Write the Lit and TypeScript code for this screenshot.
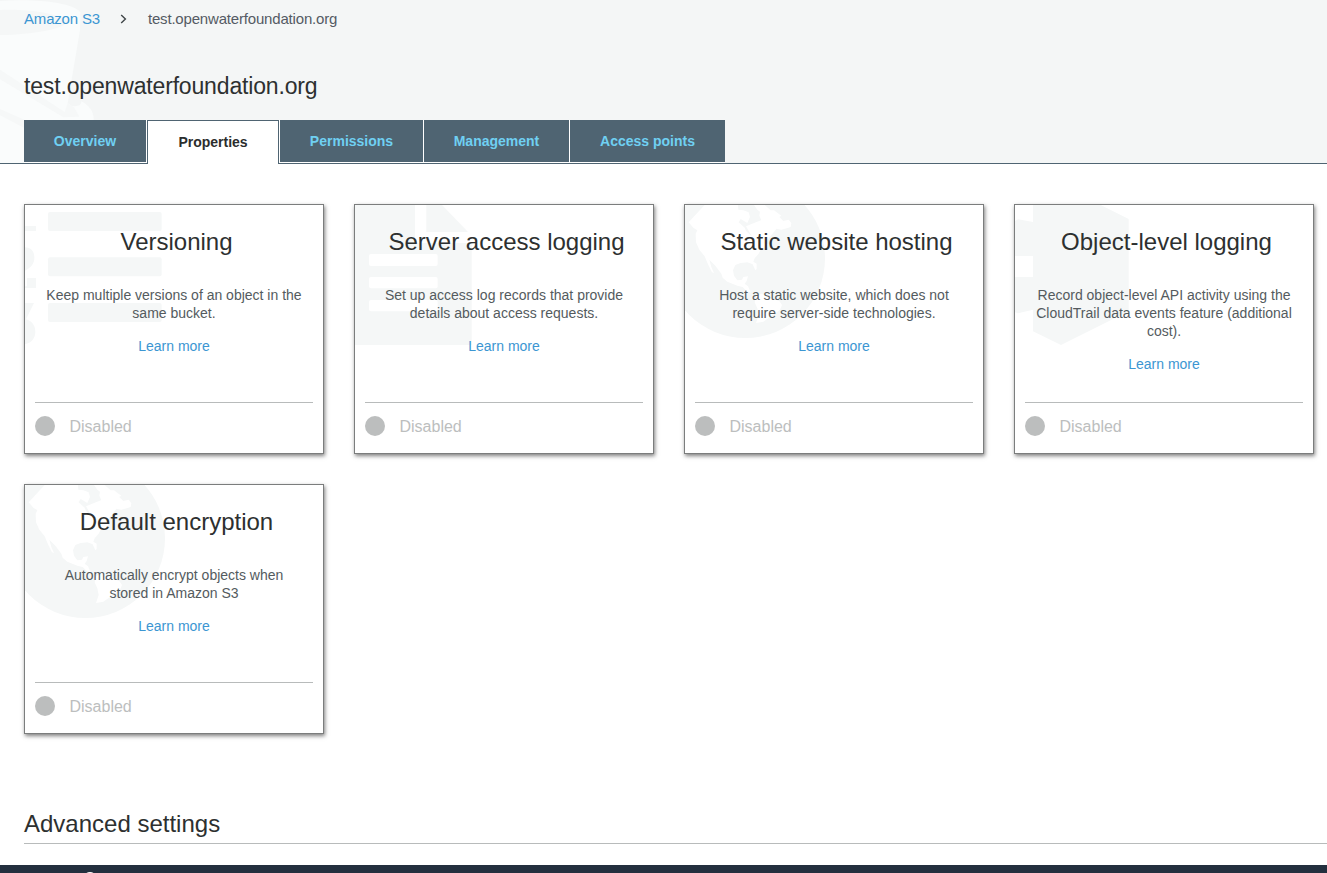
import { LitElement, html, css, svg } from "lit";
import { customElement, property } from "lit/decorators.js";

const FONT = css`"Liberation Sans", Arial, sans-serif`;

// Watermarks are drawn at three units per pixel.
const globe = svg`
  <circle class="tone" cx="214" cy="190" r="239"></circle>
  <path class="cut" d="M44 82 L62 62 L92 30 L192 30 L193 44 L208 46 L224 52 L228 66 L220 84 L200 72 L194 82 L212 98 L216 108 L236 126 L252 130 L268 142 L284 148 L280 158 L262 160 L254 176 L242 190 L238 200 L248 206 L248 222 L244 226 L236 208 L220 202 L200 204 L184 210 L177 226 L180 242 L190 256 L204 254 L208 246 L222 244 L218 258 L212 266 L222 274 L230 292 L220 290 L206 276 L190 272 L160 260 L146 248 L142 236 L124 212 L106 194 L112 216 L120 234 L114 232 L102 208 L92 184 L76 164 L66 142 L65 116 L70 106 L58 98 Z"></path>
  <path class="cut" d="M216 94 L300 60 L310 98 L284 130 L268 146 L236 128 Z"></path>
  <path class="cut" d="M240 30 L272 30 L290 46 L300 46 L322 62 L316 66 L328 78 L344 74 L352 84 L350 96 L338 100 L322 104 L310 102 L300 96 L288 104 L292 90 L276 78 L262 76 L256 62 L258 50 L250 44 Z"></path>
  <path class="cut" d="M246 304 L262 296 L280 304 L298 312 L316 318 L324 330 L318 344 L300 358 L288 366 L268 380 L246 384 L254 360 L250 340 L242 322 Z"></path>`;

const ART: Record<string, unknown> = {
  list: svg`
    <rect class="tone" x="102" y="51" width="341" height="57" rx="6"></rect>
    <rect class="tone" x="102" y="187" width="341" height="57" rx="6"></rect>
    <rect class="tone" x="102" y="324" width="341" height="57" rx="6"></rect>
    <rect class="tone" x="33" y="93" width="33" height="15"></rect>
    <path class="tone" d="M33 157 C52 158 61 170 61 188 C61 206 50 218 33 227 Z"></path>
    <path class="tone" d="M39 249 H66 V279 H33 V274 H39 Z"></path>
    <path class="tone" d="M33 324 H60 L36 373 C54 378 64 392 64 410 C64 430 52 444 33 447 Z"></path>`,
  page: svg`
    <path class="tone" d="M33 30 H213 V144 H383 V450 H33 Z M247 30 H294 L372 111 H247 Z"></path>
    <rect class="cut" x="75" y="177" width="206" height="36" rx="6"></rect>
    <rect class="cut" x="75" y="246" width="206" height="34" rx="6"></rect>
    <rect class="cut" x="75" y="315" width="206" height="34" rx="6"></rect>`,
  globe,
  cube: svg`
    <path class="tone" d="M87 30 H290 L374 72 V349 L171 450 L87 409 V344 L42 355 L33 352 V246 H87 V183 H33 V78 L42 73 L87 81 Z"></path>`,
};

@customElement("property-card")
export class PropertyCard extends LitElement {
  @property() heading = "";
  @property() text = "";
  @property() art = "";

  static styles = css`
    :host { display: block; }
    .card {
      box-sizing: border-box; width: 300px; height: 250px; border: 1px solid #7b7d7d;
      background: #fff; box-shadow: 1px 2px 4px rgba(0, 0, 0, .5);
      display: grid; font-family: ${FONT};
    }
    .art { grid-area: 1 / 1; width: 298px; height: 248px; display: block; }
    .tone { fill: #f5f7f7; }
    .cut { fill: #fff; }
    .body { grid-area: 1 / 1; display: flex; flex-direction: column; padding: 0 10px; z-index: 1; }
    h2 {
      margin: 23px 0 0 5px; font-weight: 400; font-size: 24px; line-height: 28px;
      color: #2d3030; text-align: center; white-space: nowrap;
    }
    p { margin: 30px 10px 0; font-size: 14px; line-height: 18px; color: #545b5e; text-align: center; }
    a { margin-top: 15px; font-size: 14px; line-height: 18px; color: #3c96d2; text-align: center; }
    .state {
      margin-top: auto; height: 51px; box-sizing: border-box; border-top: 1px solid #b8bbbb;
      display: flex; align-items: center; gap: 14.5px; padding-bottom: 3px;
      color: #bcbebe; font-size: 16px; line-height: 20px;
    }
    .dot { width: 20px; height: 20px; margin-bottom: 2px; border-radius: 50%; background: #bcbebe; }
  `;

  render() {
    return html`<div class="card">
      <svg class="art" viewBox="33 30 894 744" aria-hidden="true">${ART[this.art]}</svg>
      <div class="body">
        <h2>${this.heading}</h2>
        <p>${this.text}</p>
        <a>Learn more</a>
        <div class="state"><span class="dot"></span><span>Disabled</span></div>
      </div>
    </div>`;
  }
}

const TABS = [
  { label: "Overview", width: 122 },
  { label: "Properties", width: 132, active: true },
  { label: "Permissions", width: 143 },
  { label: "Management", width: 145 },
  { label: "Access points", width: 155 },
];

const CARDS = [
  { heading: "Versioning", art: "list", text: "Keep multiple versions of an object in the same bucket." },
  { heading: "Server access logging", art: "page", text: "Set up access log records that provide details about access requests." },
  { heading: "Static website hosting", art: "globe", text: "Host a static website, which does not require server-side technologies." },
  { heading: "Object-level logging", art: "cube", text: "Record object-level API activity using the CloudTrail data events feature (additional cost)." },
  { heading: "Default encryption", art: "globe", text: "Automatically encrypt objects when stored in Amazon S3" },
];

@customElement("app-root")
export class AppRoot extends LitElement {
  static styles = css`
    :host {
      display: flex; flex-direction: column; height: 873px; overflow: hidden;
      background: #fff; font-family: ${FONT};
    }
    header { display: grid; height: 164px; flex: none; background: #f4f6f6; }
    .bucket { grid-area: 1 / 1; width: 110px; height: 163px; display: block; }
    .head { grid-area: 1 / 1; z-index: 1; display: flex; flex-direction: column; box-sizing: border-box; height: 164px; border-bottom: 1px solid #4f6472; }
    .crumbs { display: flex; align-items: center; padding: 10px 0 0 24px; height: 18px; font-size: 15px; line-height: 18px; letter-spacing: -.18px; color: #545b64; }
    .crumbs a { color: #3c96d2; }
    .crumbs svg { margin: 0 21px 0 20px; width: 7px; height: 10px; }
    h1 { margin: 44px 0 0 24px; font-weight: 400; font-size: 23px; letter-spacing: -.16px; line-height: 28px; color: #2d3030; }
    nav { display: flex; align-items: flex-start; gap: 1px; height: 43px; margin: 20px 0 0 24px; }
    .tab {
      height: 42px; line-height: 42px; text-align: center; font-weight: 700; font-size: 14px;
      background: #4f6472; color: #6fd0f2; box-shadow: 0 0 0 1px #fff; clip-path: inset(0 -1px -1px -1px);
    }
    .tab:first-child { clip-path: inset(0 -1px -1px 0); }
    .tab:last-child { clip-path: inset(0 0 -1px -1px); }
    .tab.active {
      box-sizing: border-box; height: 44px; background: #fff; color: #2b2d2d;
      border: 1px solid #4f6472; border-bottom: 0; box-shadow: none; clip-path: none;
    }
    main { display: grid; grid-template-columns: repeat(4, 300px); gap: 30px; padding: 40px 0 0 24px; }
    h3 { margin: 76px 0 0 24px; font-weight: 400; font-size: 24px; line-height: 28px; padding-bottom: 5px; border-bottom: 1px solid #b8bbbb; color: #2d3030; }
    footer { margin-top: auto; height: 8px; background: #232f3e; flex: none; }
    footer svg { display: block; margin-left: 80px; width: 20px; height: 8px; }
  `;

  render() {
    return html`
      <header>
        <svg class="bucket" viewBox="0 0 330 489" aria-hidden="true">
          <path fill="#fafcfc" d="M0 3 C100 -4 215 6 241 36 L240 90 L203 310 L215 318 C235 320 244 316 244 304 C270 318 280 335 281 355 V489 H0 Z"></path>
          <path fill="#f5f7f7" d="M0 30 C90 26 180 42 205 65 C190 86 100 104 0 105 Z"></path>
          <path fill="#f6f8f8" d="M0 209 L194 336 L203 310 L222 322 L238 350 L190 352 L0 238 Z"></path>
          <path fill="#f6f8f8" d="M0 327 L80 362 L80 388 L0 346 Z"></path>
        </svg>
        <div class="head">
          <div class="crumbs">
            <a>Amazon S3</a>
            <svg viewBox="0 0 7 10"><path d="M1.2 1 L5.4 5 L1.2 9" fill="none" stroke="#3f4648" stroke-width="1.4"></path></svg>
            <span>test.openwaterfoundation.org</span>
          </div>
          <h1>test.openwaterfoundation.org</h1>
          <nav>
            ${TABS.map((t) => html`<div class="tab ${t.active ? "active" : ""}" style="width:${t.width}px">${t.label}</div>`)}
          </nav>
        </div>
      </header>
      <main>
        ${CARDS.map((c) => html`<property-card .heading=${c.heading} .art=${c.art} .text=${c.text}></property-card>`)}
      </main>
      <h3>Advanced settings</h3>
      <footer><svg viewBox="0 0 20 8"><ellipse cx="10" cy="10" rx="5" ry="3" fill="#fff"></ellipse></svg></footer>
    `;
  }
}
